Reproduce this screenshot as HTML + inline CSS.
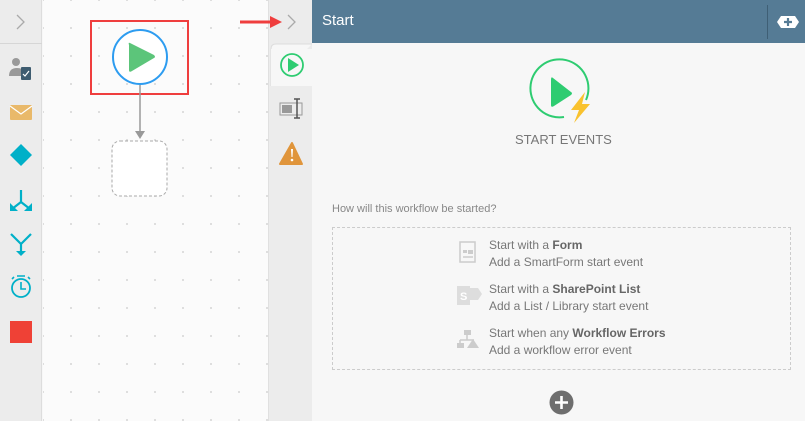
<!DOCTYPE html>
<html><head><meta charset="utf-8"><style>
*{margin:0;padding:0;box-sizing:border-box}
body{width:805px;height:421px;overflow:hidden;position:relative;font-family:"Liberation Sans",sans-serif;background:#f7f7f7}
.abs{position:absolute}
.txt{font-size:12px;color:#777;line-height:17px}
.txt b{color:#666}
</style></head><body>
<div class="abs" style="left:0;top:0;width:42px;height:421px;background:#ececec;border-right:1px solid #ddd"></div>
<div class="abs" style="left:0;top:43px;width:42px;height:1px;background:#d6d6d6"></div>
<svg class="abs" style="left:0;top:0" width="42" height="421">
<path d="M17 15 L24 22 L17 29" fill="none" stroke="#aaa" stroke-width="1.3"/>
<circle cx="16" cy="62" r="4" fill="#999"/><path d="M9 76 q0-8 8-8 q6 0 7 4 v4z" fill="#999"/>
<rect x="21" y="67" width="10" height="13" rx="1" fill="#3e5c70"/><path d="M23 74 l2 2 l4-5" stroke="#fff" fill="none" stroke-width="1.2"/>
<rect x="10" y="105" width="22" height="15" rx="1" fill="#e9b96a"/><path d="M10 106 L21 114 L32 106" fill="none" stroke="#fff" stroke-width="1.2"/>
<path d="M21 144 L32 155 L21 166 L10 155Z" fill="#00b0c8"/>
<path d="M21 190 v12 M21 202 l-9 7 M21 202 l9 7" stroke="#00b0c8" stroke-width="2.2" fill="none"/><path d="M10 203 v8 h8z M32 203 v8 h-8z" fill="#00b0c8"/>
<path d="M11 234 L21 244 L31 234 M21 244 v9" stroke="#00b0c8" stroke-width="2.2" fill="none"/><path d="M16 251 h10 l-5 5z" fill="#00b0c8"/>
<circle cx="21" cy="288" r="9" fill="none" stroke="#00b0c8" stroke-width="1.8"/><path d="M21 282 v7 h5 M17 276 h8 M12 279 l2-2 M30 279 l-2-2" stroke="#00b0c8" stroke-width="1.6" fill="none"/>
<rect x="10" y="321" width="22" height="22" fill="#ef4136"/>
</svg>
<div class="abs" style="left:43px;top:0;width:225px;height:421px;background-color:#fbfbfb;background-image:radial-gradient(#d4d4d4 0.8px,transparent 1px);background-size:28px 28px;background-position:14px 14px"></div>
<svg class="abs" style="left:43px;top:0" width="225" height="421">
<rect x="48" y="21" width="97" height="73" fill="none" stroke="#ef3e3e" stroke-width="2"/>
<circle cx="97" cy="57" r="27" fill="#fff" stroke="#2d9cf0" stroke-width="2"/>
<path d="M87 43 Q85 42 86 45 V70 Q86 73 89 71 L111 58 Q113 57 111 55Z" fill="#5cc57a"/>
<path d="M97 85 V131" stroke="#999" stroke-width="1.5"/><path d="M92 131 h10 l-5 8z" fill="#999"/>
<rect x="69" y="141" width="55" height="55" rx="8" fill="#fff" stroke="#aaa" stroke-dasharray="3 2"/>
</svg>
<div class="abs" style="left:268px;top:0;width:44px;height:421px;background:#ececec;border-left:1px solid #e0e0e0"></div>
<svg class="abs" style="left:268px;top:0" width="44" height="421">
<path d="M20 15 L27 22 L20 29" fill="none" stroke="#aaa" stroke-width="1.3"/>
<path d="M3 86 V49 q0-5 5-5 H44" fill="#f7f7f7" stroke="#ddd"/>
<rect x="3" y="49" width="41" height="37" fill="#f7f7f7"/>
<circle cx="24" cy="65" r="11" fill="none" stroke="#2ecc71" stroke-width="1.8"/><path d="M20 58 V72 L31 65z" fill="#2ecc71"/>
<rect x="12" y="103" width="22" height="12" fill="none" stroke="#999"/><rect x="14" y="105" width="10" height="8" fill="#999"/><path d="M29 99 v19 M26 99 h6 M26 118 h6" stroke="#555" stroke-width="1.5"/>
<path d="M24 143 L34 164 H12Z" fill="#e0953b" stroke="#e0953b" stroke-linejoin="round" stroke-width="2"/><path d="M23 149 h2 l-.5 8 h-1z" fill="#fff"/><circle cx="24" cy="160" r="1.3" fill="#fff"/>
</svg>
<svg class="abs" style="left:238px;top:12px" width="45" height="20"><path d="M2 10 H34" stroke="#ef3e3e" stroke-width="3"/><path d="M32 4 L44 10 L32 16z" fill="#ef3e3e"/></svg>
<div class="abs" style="left:312px;top:0;width:493px;height:43px;background:#557b95"></div>
<div class="abs" style="left:322px;top:12px;color:#fff;font-size:15px">Start</div>
<div class="abs" style="left:767px;top:5px;width:1px;height:34px;background:#3f5f75"></div>
<svg class="abs" style="left:776px;top:14px" width="24" height="16"><path d="M1 8 L5 2 H19 L23 8 L19 14 H5Z" fill="#fff"/><path d="M12 4 v8 M8 8 h8" stroke="#557b95" stroke-width="2.2"/></svg>
<svg class="abs" style="left:527px;top:58px" width="70" height="70">
<path d="M37 59 A29 29 0 1 1 59 42" fill="none" stroke="#2ecc71" stroke-width="2"/>
<path d="M26 20 Q24 18 24 22 V47 Q24 50 27 48 L44 37 Q46 35 44 34Z" fill="#2ecc71"/>
<path d="M58 34 L44 52 H52 L47 65 L63 46 H55Z" fill="#f9c22e"/>
</svg>
<div class="abs" style="left:515px;top:132px;font-size:13px;color:#777">START EVENTS</div>
<div class="abs" style="left:332px;top:203px;font-size:11px;color:#888">How will this workflow be started?</div>
<div class="abs" style="left:332px;top:227px;width:459px;height:143px;border:1px dashed #ccc"></div>
<svg class="abs" style="left:455px;top:240px" width="30" height="125">
<rect x="5" y="2" width="15" height="20" fill="none" stroke="#ccc" stroke-width="1.5"/><rect x="8" y="10" width="4" height="3" fill="#ccc"/><rect x="13" y="10" width="5" height="4" fill="#ccc"/><path d="M8 17 h10" stroke="#ccc" stroke-width="1.5"/>
<rect x="2" y="46" width="13" height="19" fill="#ddd"/><path d="M15 48 h8 l4 6 l-4 6 h-8z" fill="#ddd"/><text x="5" y="60" font-size="11" font-weight="bold" fill="#fff" font-family="Liberation Sans">S</text>
<rect x="9" y="90" width="7" height="5" fill="#ccc"/><path d="M12 95 v5 M5 100 h14 M5 100 v3" stroke="#ccc" stroke-width="1.5"/><rect x="2" y="103" width="7" height="5" fill="#ccc"/><path d="M18 99 L24 108 H12Z" fill="#ccc"/>
</svg>
<div class="abs txt" style="left:489px;top:237px">Start with a <b>Form</b><br>Add a SmartForm start event</div>
<div class="abs txt" style="left:489px;top:281px">Start with a <b>SharePoint List</b><br>Add a List / Library start event</div>
<div class="abs txt" style="left:489px;top:325px">Start when any <b>Workflow Errors</b><br>Add a workflow error event</div>
<svg class="abs" style="left:549px;top:390px" width="26" height="26"><circle cx="12.5" cy="12.5" r="12" fill="#6e6e6e"/><path d="M12.5 6 v13 M6 12.5 h13" stroke="#fff" stroke-width="2.6"/></svg>
</body></html>
